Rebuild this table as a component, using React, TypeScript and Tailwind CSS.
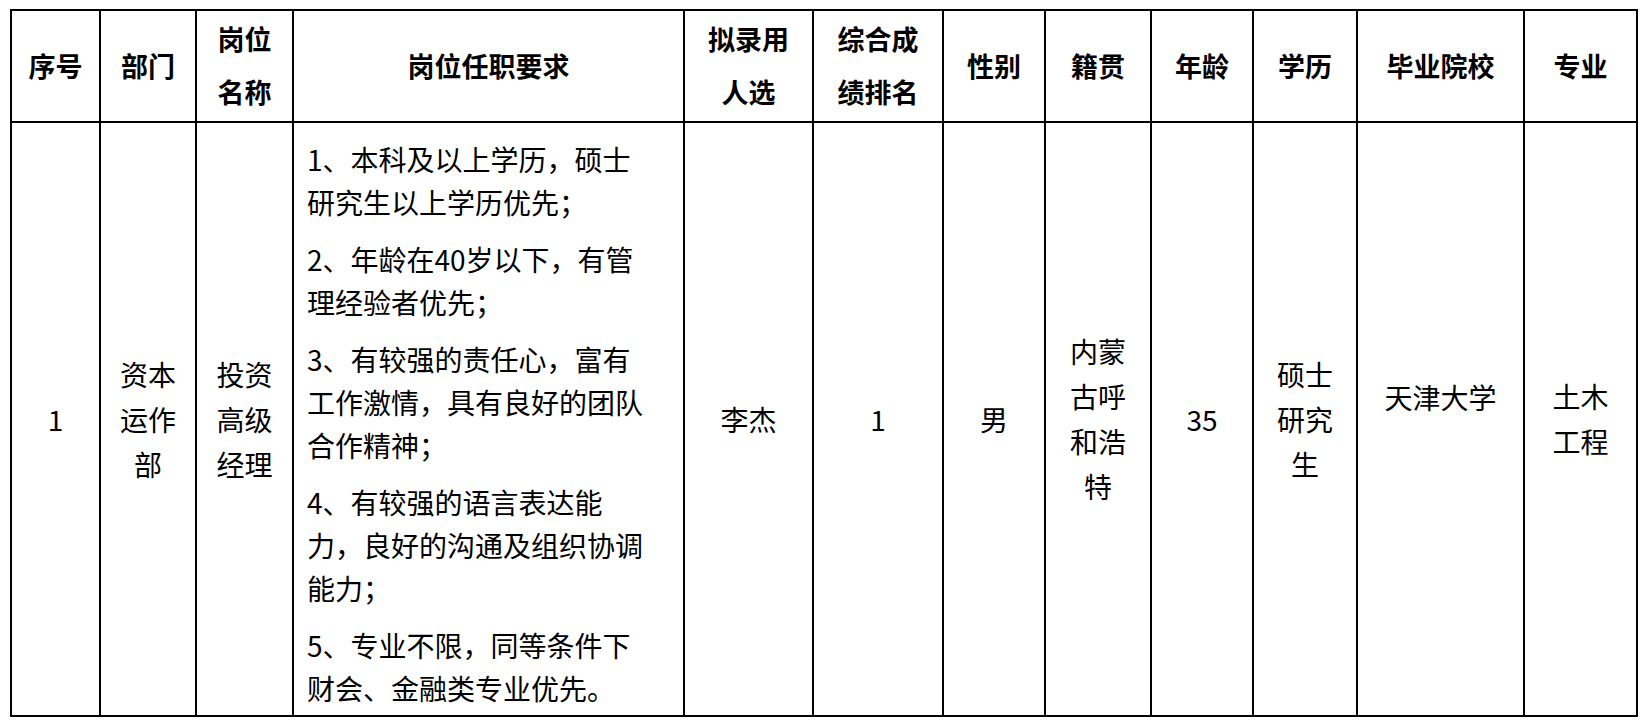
const headers: string[][] = [
  ["序号"],
  ["部门"],
  ["岗位", "名称"],
  ["岗位任职要求"],
  ["拟录用", "人选"],
  ["综合成", "绩排名"],
  ["性别"],
  ["籍贯"],
  ["年龄"],
  ["学历"],
  ["毕业院校"],
  ["专业"],
];

const requirements: string[][] = [
  ["1、本科及以上学历，硕士", "研究生以上学历优先；"],
  ["2、年龄在40岁以下，有管", "理经验者优先；"],
  ["3、有较强的责任心，富有", "工作激情，具有良好的团队", "合作精神；"],
  ["4、有较强的语言表达能", "力，良好的沟通及组织协调", "能力；"],
  ["5、专业不限，同等条件下", "财会、金融类专业优先。"],
];

const Lines = ({ lines }: { lines: string[] }) => (
  <div className="flex flex-col items-center">
    {lines.map((l, i) => (
      <span key={i} className="block whitespace-nowrap">
        {l}
      </span>
    ))}
  </div>
);

const Cell = ({ lines }: { lines: string[] }) => (
  <div className="bg-white flex items-center justify-center text-[28px] leading-[45px] text-black">
    <Lines lines={lines} />
  </div>
);

export default function App() {
  return (
    <div className="min-h-screen bg-white pt-[9px] pl-[10px] font-['Noto_Sans_CJK_SC',sans-serif]">
      <div className="inline-grid grid-cols-[87px_94px_95px_389px_127px_128px_100px_104px_100px_102px_165px_111px] grid-rows-[110px_592px] gap-[2px] p-[2px] bg-black">
        {headers.map((h, i) => (
          <div
            key={i}
            className="bg-white flex items-center justify-center pb-[2px] text-[27px] font-bold leading-[53px] text-black"
          >
            <Lines lines={h} />
          </div>
        ))}

        <Cell lines={["1"]} />
        <Cell lines={["资本", "运作", "部"]} />
        <Cell lines={["投资", "高级", "经理"]} />
        <div className="bg-white flex flex-col justify-start gap-[14px] pt-[15px] pl-[13px] text-[28px] leading-[43px] text-black">
          {requirements.map((p, i) => (
            <div key={i}>
              {p.map((l, j) => (
                <span key={j} className="block whitespace-nowrap">
                  {l}
                </span>
              ))}
            </div>
          ))}
        </div>
        <Cell lines={["李杰"]} />
        <Cell lines={["1"]} />
        <Cell lines={["男"]} />
        <Cell lines={["内蒙", "古呼", "和浩", "特"]} />
        <Cell lines={["35"]} />
        <Cell lines={["硕士", "研究", "生"]} />
        <div className="bg-white flex items-center justify-center text-[28px] leading-[45px] text-black">
          <span className="-mt-[44px]">天津大学</span>
        </div>
        <Cell lines={["土木", "工程"]} />
      </div>
    </div>
  );
}
